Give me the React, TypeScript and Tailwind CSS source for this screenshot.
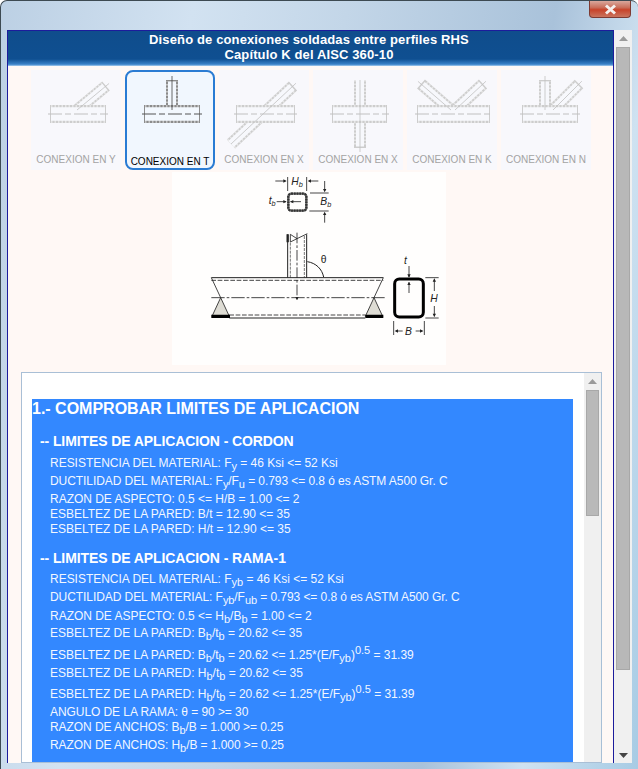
import React from "react";

type Seg = [number, number, number, number];

function trim(b: Seg, d: number): Seg {
  const len = Math.hypot(b[2] - b[0], b[3] - b[1]);
  return [b[0], b[1], b[2] - ((b[2] - b[0]) / len) * d, b[3] - ((b[3] - b[1]) / len) * d];
}

function Tile({ label, bars, chord, selected }: { label: string; bars: Seg[]; chord: [number, number]; selected?: boolean }) {
  const c = selected ? "#8c8c8c" : "#cdcdcd";
  const hatch = selected ? "#c4c4c4" : "#e6e6e6";
  const inner = selected ? "#f3f8fe" : "#f7f8fc";
  const line = selected ? "#444444" : "#c0c0c0";
  return (
    <div
      className={
        selected
          ? "w-[90px] h-[100px] rounded-[8px] border-2 border-[#2b7cd3] bg-[#f1f7fe] flex flex-col items-center"
          : "w-[90px] h-[100px] border-2 border-transparent bg-[#f8f8fc] flex flex-col items-center"
      }
    >
      <svg width="86" height="82" viewBox="0 0 86 82" className="shrink-0 blur-[0.3px]">
        {bars.map((b, i) => {
          const t = trim(b, 1.5);
          return (
            <g key={i}>
              <line x1={b[0]} y1={b[1]} x2={b[2]} y2={b[3]} stroke={c} strokeWidth="12" />
              <line x1={t[0]} y1={t[1]} x2={t[2]} y2={t[3]} stroke={hatch} strokeWidth="12" strokeDasharray="1.5 2" />
              <line x1={t[0]} y1={t[1]} x2={t[2]} y2={t[3]} stroke={inner} strokeWidth="8" />
            </g>
          );
        })}
        <line x1={chord[0]} y1="42" x2={chord[1]} y2="42" stroke={c} strokeWidth="18" />
        <line x1={chord[0] + 1} y1="42" x2={chord[1] - 1} y2="42" stroke={hatch} strokeWidth="18" strokeDasharray="1.5 2" />
        <line x1={chord[0] + 1} y1="42" x2={chord[1] - 1} y2="42" stroke={inner} strokeWidth="13.5" />
        <line x1={chord[0] - 2} y1="42" x2={chord[1] + 2} y2="42" stroke={selected ? "#555555" : "#c0c0c0"} strokeWidth="1" strokeDasharray="14 3 6 3" />
        {bars.map((b, i) => {
          const t = trim(b, -4);
          return <line key={i} x1={t[0]} y1={t[1]} x2={t[2]} y2={t[3]} stroke={line} strokeWidth="0.8" />;
        })}
      </svg>
      <div
        className={
          selected
            ? "text-[10px] leading-[12px] mt-[2px] text-[#000000] whitespace-nowrap"
            : "text-[10px] leading-[12px] text-[#a3a3a3] whitespace-nowrap"
        }
      >
        {label}
      </div>
    </div>
  );
}

function Diagram() {
  const t = "#222222";
  return (
    <svg width="274" height="193" viewBox="6 3 822 579" className="bg-[#fffefd]">
      <g fill="none" stroke={t} strokeWidth="2.5">
        <rect x="355" y="68" width="54" height="51" rx="9" stroke="#666666" strokeWidth="7" />
        <rect x="355" y="68" width="54" height="51" rx="9" stroke="#333333" strokeWidth="7" strokeDasharray="5 3" />
        <path d="M353 18V60M410 18V60M316 30H346M445 30H417M420 66H476M418 120H476M464 30V60M464 155V126M320 92H348M393 92H362" />
        <path d="M353 190V320M410 190V320" strokeWidth="3" />
        <path d="M361 215V320M403 195V320" stroke="#777777" strokeWidth="3" strokeDasharray="9 3" />
        <path d="M381 185V385" strokeWidth="2.5" strokeDasharray="32 6 8 6" />
        <path d="M361 190L381 203L361 213Z M381 203L412 188" strokeWidth="2.5" />
        <path d="M353 190V214" strokeWidth="7" />
        <path d="M412 272C438 276 456 294 461 318" strokeWidth="3" />
        <path d="M124 320H640M178 441H586" strokeWidth="3" />
        <path d="M124 328H640M178 432H586" strokeWidth="2.5" strokeDasharray="14 5" />
        <path d="M124 380H645" strokeWidth="2.5" strokeDasharray="40 6 8 6" />
        <path d="M124 320L152 380M640 320L612 380" strokeWidth="2.5" />
        <path d="M152 380L126 436H178Z M612 380L586 436H638Z" fill="#dedcd4" strokeWidth="2.5" />
        <path d="M124 436H180M586 436H640" stroke="#000000" strokeWidth="10" />
        <rect x="674" y="324" width="86" height="114" rx="14" stroke="#000000" strokeWidth="9" />
        <path d="M717 285V318M717 366V334M766 320H806M766 441H806M793 326V360M793 405V436M671 450V492M763 450V492M678 480H698M757 480H737" />
      </g>
      <g fill={t} stroke="none">
        <path d="M350 92l-10-5v10zM360 92l10-5v10zM350 30l-10-5v10zM413 30l10-5v10zM464 64l-5-10h10zM464 122l-5 10h10zM717 320l-5-10h10zM717 332l-5 10h10zM793 322l-5 10h10zM793 438l-5-10h10zM674 480l10-5v10zM760 480l-10-5v10zM381 388l-5-10h10z" />
      </g>
      <g fill="#222222" fontFamily="'Liberation Sans', sans-serif" fontStyle="italic" fontSize="31">
        <text x="364" y="43">H<tspan fontSize="22" dy="6">b</tspan></text>
        <text x="451" y="103">B<tspan fontSize="22" dy="6">b</tspan></text>
        <text x="296" y="100">t<tspan fontSize="22" dy="6">b</tspan></text>
        <text x="702" y="278">t</text>
        <text x="781" y="392">H</text>
        <text x="705" y="491">B</text>
        <text x="452" y="275" fontStyle="normal">θ</text>
      </g>
    </svg>
  );
}

function Arrow({ up, dark }: { up?: boolean; dark?: boolean }) {
  return (
    <svg width="9" height="5" viewBox="0 0 9 5">
      <path d={up ? "M4.5 0L9 5H0Z" : "M0 0H9L4.5 5Z"} fill={dark ? "#444444" : "#9a9a9a"} />
    </svg>
  );
}

const Row = ({ h, tight, children }: { h: string; tight?: boolean; children: React.ReactNode }) => (
  <div className={h + (tight ? " tracking-[-0.07px]" : " tracking-[-0.02px]") + " leading-[15px] pl-[18px] text-[12px] text-[#f2f7ff] whitespace-nowrap"}>{children}</div>
);

const Sub = ({ h, children }: { h: string; children: React.ReactNode }) => (
  <div className={h + " leading-[15px] pl-[8px] text-[14px] tracking-[-0.1px] font-bold text-white whitespace-nowrap"}>{children}</div>
);

const s = (x: string) => <sub className="text-[11px] leading-[0]">{x}</sub>;
const p = (x: string) => <sup className="text-[11px] leading-[0]">{x}</sup>;

export default function App() {
  return (
    <div className="w-[638px] h-[769px] overflow-hidden flex flex-col rounded-t-[7px] border-l border-t border-[#3d4a52] bg-[linear-gradient(100deg,#bcd0e4_0%,#d2e2f1_25%,#c3d6e8_45%,#a9c2da_72%,#cfe2f1_85%,#a7cbe4_100%)] font-['Liberation_Sans',Arial,sans-serif]">
      <div className="h-[29px] shrink-0 flex justify-end pr-[7px]">
        <div className="w-[42px] h-[17px] rounded-b-[4px] border border-t-0 border-[#7d3a32] bg-[linear-gradient(180deg,#d9a79c_0%,#c9705c_40%,#c8432a_55%,#c9745e_100%)] flex items-center justify-center">
          <svg width="13" height="11" viewBox="0 0 13 11">
            <path d="M2 1.5L11 9.5M11 1.5L2 9.5" stroke="#f5f0ee" strokeWidth="3" />
          </svg>
        </div>
      </div>
      <div className="h-[733px] shrink-0 flex pl-[6px]">
        <div className="w-[607px] h-[733px] border-l border-t border-r border-[#1c1c9c] bg-[#fff8f5] flex flex-col overflow-hidden">
          <div className="h-[35px] shrink-0 bg-[linear-gradient(180deg,#0f4d8c_0%,#0f4f91_80%,#3b82c8_95%,#a9cdee_100%)] text-white text-[13px] leading-[15px] tracking-[0.13px] font-bold text-center pt-[1px] pr-[3px]">
            <div>Diseño de conexiones soldadas entre perfiles RHS</div>
            <div>Capítulo K del AISC 360-10</div>
          </div>
          <div className="flex gap-[4px] pl-[23px] pt-[4px] shrink-0">
            <Tile label="CONEXION EN Y" chord={[17, 73]} bars={[[44, 38, 73, 14]]} />
            <Tile label="CONEXION EN T" selected chord={[17, 73]} bars={[[45, 38, 45, 8]]} />
            <Tile label="CONEXION EN X" chord={[15, 74]} bars={[[10, 72, 72, 14]]} />
            <Tile label="CONEXION EN X" chord={[17, 72]} bars={[[45, 8, 45, 76]]} />
            <Tile label="CONEXION EN K" chord={[8, 81]} bars={[[42, 38, 12, 12], [46, 38, 74, 12]]} />
            <Tile label="CONEXION EN N" chord={[19, 75]} bars={[[42, 38, 42, 8], [50, 38, 76, 12]]} />
          </div>
          <div className="flex justify-center mt-[2px] pr-[4px] shrink-0">
            <Diagram />
          </div>
          <div className="ml-[13px] mt-[7px] w-[581px] flex-1 min-h-0 border border-[#a9bfd6] flex overflow-hidden">
            <div className="w-[562px] bg-white pl-[10px] pt-[26px]">
              <div className="w-[541px] h-[420px] bg-[#3388ff]">
                <div className="h-[35px] pt-[1px] text-[16px] leading-[18px] font-bold text-white whitespace-nowrap">1.- COMPROBAR LIMITES DE APLICACION</div>
                <Sub h="h-[22px]">-- LIMITES DE APLICACION - CORDON</Sub>
                <Row h="h-[18px]">RESISTENCIA DEL MATERIAL: F{s("y")} = 46 Ksi &lt;= 52 Ksi</Row>
                <Row h="h-[18px]" tight>DUCTILIDAD DEL MATERIAL: F{s("y")}/F{s("u")} = 0.793 &lt;= 0.8 ó es ASTM A500 Gr. C</Row>
                <Row h="h-[15px]">RAZON DE ASPECTO: 0.5 &lt;= H/B = 1.00 &lt;= 2</Row>
                <Row h="h-[15px]">ESBELTEZ DE LA PARED: B/t = 12.90 &lt;= 35</Row>
                <Row h="h-[29px]">ESBELTEZ DE LA PARED: H/t = 12.90 &lt;= 35</Row>
                <Sub h="h-[21px]">-- LIMITES DE APLICACION - RAMA-1</Sub>
                <Row h="h-[18px]">RESISTENCIA DEL MATERIAL: F{s("yb")} = 46 Ksi &lt;= 52 Ksi</Row>
                <Row h="h-[19px]" tight>DUCTILIDAD DEL MATERIAL: F{s("yb")}/F{s("ub")} = 0.793 &lt;= 0.8 ó es ASTM A500 Gr. C</Row>
                <Row h="h-[17px]">RAZON DE ASPECTO: 0.5 &lt;= H{s("b")}/B{s("b")} = 1.00 &lt;= 2</Row>
                <Row h="h-[22px]">ESBELTEZ DE LA PARED: B{s("b")}/t{s("b")} = 20.62 &lt;= 35</Row>
                <Row h="h-[18px]">ESBELTEZ DE LA PARED: B{s("b")}/t{s("b")} = 20.62 &lt;= 1.25*(E/F{s("yb")}){p("0.5")} = 31.39</Row>
                <Row h="h-[21px]">ESBELTEZ DE LA PARED: H{s("b")}/t{s("b")} = 20.62 &lt;= 35</Row>
                <Row h="h-[18px]">ESBELTEZ DE LA PARED: H{s("b")}/t{s("b")} = 20.62 &lt;= 1.25*(E/F{s("yb")}){p("0.5")} = 31.39</Row>
                <Row h="h-[15px]" tight>ANGULO DE LA RAMA: θ = 90 &gt;= 30</Row>
                <Row h="h-[18px]" tight>RAZON DE ANCHOS: B{s("b")}/B = 1.000 &gt;= 0.25</Row>
                <Row h="h-[18px]" tight>RAZON DE ANCHOS: H{s("b")}/B = 1.000 &gt;= 0.25</Row>
              </div>
            </div>
            <div className="w-[17px] bg-[#f0f0f0] flex flex-col items-center">
              <div className="h-[17px] shrink-0 flex items-center justify-center"><Arrow up /></div>
              <div className="w-[13px] h-[126px] shrink-0 bg-[#b9b9b9] border border-[#a8a8a8]" />
            </div>
          </div>
        </div>
        <div className="w-[18px] h-[733px] bg-[#f0f0f0] flex flex-col items-center shrink-0">
          <div className="h-[17px] shrink-0 flex items-center justify-center"><Arrow up /></div>
          <div className="w-[14px] h-[623px] shrink-0 bg-[#b8b8b8] border border-[#a8a8a8]" />
          <div className="flex-1 flex items-end justify-center pb-[5px]"><Arrow dark /></div>
        </div>
      </div>
    </div>
  );
}
